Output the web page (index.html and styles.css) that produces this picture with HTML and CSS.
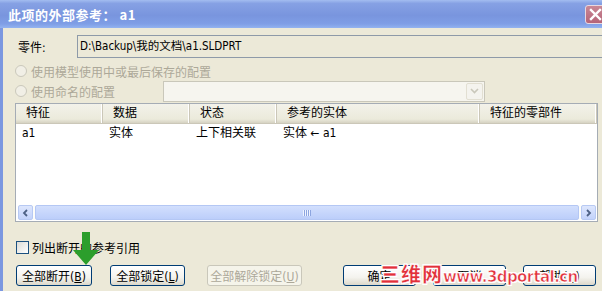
FILE: index.html
```html
<!DOCTYPE html>
<html lang="zh">
<head>
    <meta charset="UTF-8">
    <title>此项的外部参考</title>
    <link rel="stylesheet" href="styles.css">
</head>
<body>
    <div class="window">
        <div class="titlebar">
            <span class="title">此项的外部参考： a1</span>
            <span class="closeBtn">
                <svg width="13" height="13" viewBox="0 0 13 13"><path d="M2 2 L11 11 M11 2 L2 11" stroke="#fff" stroke-width="2.4" stroke-linecap="square"/></svg>
            </span>
        </div>
        <div class="dialogBody">
            <div class="partRow">
                <span class="partLabel">零件:</span>
                <div class="partPath">D:\Backup\我的文档\a1.SLDPRT</div>
            </div>
            <div class="radioRow">
                <span class="radio"></span>
                <span class="disabledText">使用模型使用中或最后保存的配置</span>
            </div>
            <div class="radioRow second">
                <span class="radio"></span>
                <span class="disabledText">使用命名的配置</span>
                <div class="combo">
                    <span class="comboBtn">
                        <svg width="9" height="6" viewBox="0 0 9 6"><path d="M1 1 L4.5 4.5 L8 1" fill="none" stroke="#c9c7ba" stroke-width="1.6"/></svg>
                    </span>
                </div>
            </div>
            <div class="listView">
                <div class="listHeader">
                    <div class="headCell">特征</div>
                    <div class="headCell">数据</div>
                    <div class="headCell">状态</div>
                    <div class="headCell">参考的实体</div>
                    <div class="headCell">特征的零部件</div>
                </div>
                <div class="listRow">
                    <div class="cell">a1</div>
                    <div class="cell">实体</div>
                    <div class="cell">上下相关联</div>
                    <div class="cell">实体 ← a1</div>
                    <div class="cell"></div>
                </div>
                <div class="listFill"></div>
                <div class="hScroll">
                    <span class="scrollBtn">
                        <svg width="7" height="8" viewBox="0 0 7 8"><path d="M5 1 L2 4 L5 7" fill="none" stroke="#4d6185" stroke-width="1.8"/></svg>
                    </span>
                    <div class="scrollTrack">
                        <div class="scrollThumb"><span class="grip"></span></div>
                    </div>
                    <span class="scrollBtn">
                        <svg width="7" height="8" viewBox="0 0 7 8"><path d="M2 1 L5 4 L2 7" fill="none" stroke="#4d6185" stroke-width="1.8"/></svg>
                    </span>
                </div>
            </div>
            <div class="checkRow">
                <span class="checkBox"></span>
                <span>列出断开的参考引用</span>
            </div>
            <div class="buttonRow">
                <button class="winBtn w76">全部断开(<u>B</u>)</button>
                <button class="winBtn w75 gapA">全部锁定(<u>L</u>)</button>
                <button class="winBtn w95 gapB" disabled>全部解除锁定(<u>U</u>)</button>
                <button class="winBtn w73 gapC">确定</button>
                <button class="winBtn w73 gapD">取消</button>
                <button class="winBtn w73 gapD">帮助(<u>H</u>)</button>
            </div>
        </div>
        <svg class="greenArrow" width="30" height="34" viewBox="0 0 30 34">
            <path d="M11 0 H19 V18 H28 L15 33 L2 18 H11 Z" fill="#2c9e2c"/>
        </svg>
        <div class="watermark"><span class="wmCn">三维网</span>www.3dportal.cn</div>
    </div>
</body>
</html>
```

FILE: styles.css
```css
body {
    margin: 0;
    padding: 0;
    background-color: #ece9d8;
    font-family: "DejaVu Sans Condensed", "Noto Sans CJK SC", sans-serif;
    font-size: 12px;
    color: #000;
}

.window {
    position: relative;
    width: 602px;
    height: 291px;
    overflow: hidden;
    display: flex;
    flex-direction: column;
}

.titlebar {
    height: 28px;
    flex-shrink: 0;
    display: flex;
    align-items: center;
    justify-content: space-between;
    padding-left: 8px;
    background: linear-gradient(to bottom, #a3bdf0 0, #86a1e4 12%, #7995de 55%, #7f9ee6 85%, #93b3f0 100%);
}

.title {
    color: #fff;
    font-family: "Noto Sans CJK SC", sans-serif;
    font-weight: bold;
    font-size: 13px;
    letter-spacing: 0.5px;
}

.closeBtn {
    width: 20px;
    height: 19px;
    margin-right: -3px;
    margin-top: 1px;
    box-sizing: border-box;
    border: 1px solid #e8d8e0;
    border-radius: 3px;
    background: linear-gradient(to bottom, #c98896, #b56478);
    display: flex;
    align-items: center;
    justify-content: center;
}

.dialogBody {
    flex: 1;
    border-left: 3px solid #7b97e0;
    padding-left: 12px;
    display: flex;
    flex-direction: column;
}

.partRow {
    display: flex;
    align-items: center;
    margin-top: 7px;
    height: 23px;
}

.partLabel {
    width: 59px;
    margin-left: 3px;
    flex-shrink: 0;
}

.partPath {
    width: 560px;
    flex-shrink: 0;
    height: 23px;
    box-sizing: border-box;
    border: 1px solid #8e9aa8;
    padding-left: 2px;
    line-height: 21px;
    font-size: 11.5px;
}

.radioRow {
    display: flex;
    align-items: center;
    height: 16px;
    margin-top: 5px;
}

.radioRow.second {
    height: 22px;
    margin-top: 1px;
}

.radio {
    width: 12px;
    height: 12px;
    box-sizing: border-box;
    border: 1px solid #cac8bb;
    border-radius: 50%;
    background-color: #f1efe6;
    margin-right: 4px;
}

.disabledText {
    color: #aca899;
}

.combo {
    margin-left: 48px;
    width: 322px;
    height: 21px;
    box-sizing: border-box;
    border: 1px solid #c9c7ba;
    background-color: #f6f5ef;
    display: flex;
    justify-content: flex-end;
    align-items: stretch;
    padding: 1px;
}

.comboBtn {
    width: 15px;
    border: 1px solid #e2dfd2;
    border-radius: 2px;
    background-color: #f4f3ee;
    display: flex;
    align-items: center;
    justify-content: center;
}

.listView {
    margin-top: 1px;
    width: 583px;
    height: 119px;
    box-sizing: border-box;
    border: 1px solid #a5acb5;
    background-color: #fff;
    display: flex;
    flex-direction: column;
}

.listHeader, .listRow {
    display: grid;
    grid-template-columns: 87px 87px 87px 203px 117px;
}

.listHeader {
    height: 19px;
    background: linear-gradient(to bottom, #f3f2ea, #ebeadb 80%, #d6d2c2);
    border-bottom: 1px solid #cbc7b8;
}

.headCell {
    padding-left: 10px;
    line-height: 19px;
    border-right: 1px solid #cbc7b8;
    box-shadow: inset -1px 0 0 #fff;
    white-space: nowrap;
}

.listRow {
    height: 16px;
    margin-top: 1px;
}

.cell {
    padding-left: 6px;
    line-height: 16px;
    white-space: nowrap;
}

.listFill {
    flex: 1;
}

.hScroll {
    height: 15px;
    margin: 0 1px 1px 2px;
    display: flex;
    background-color: #fdfdfa;
}

.scrollBtn {
    width: 15px;
    box-sizing: border-box;
    border: 1px solid #b7c9f3;
    border-radius: 2px;
    background: linear-gradient(to bottom, #dde6fd, #c3d3fb);
    display: flex;
    align-items: center;
    justify-content: center;
}

.scrollTrack {
    flex: 1;
    padding: 0 2px;
    display: flex;
}

.scrollThumb {
    flex: 1;
    box-sizing: border-box;
    border: 1px solid #b4c7f4;
    border-radius: 2px;
    background: linear-gradient(to bottom, #d2dffd, #bccefa);
    display: flex;
    align-items: center;
    justify-content: center;
}

.grip {
    width: 8px;
    height: 6px;
    background: repeating-linear-gradient(to right, #eef3ff 0 1px, #8ca5e0 1px 2px);
}

.checkRow {
    display: flex;
    align-items: center;
    height: 13px;
    margin-top: 19px;
    margin-left: 1px;
}

.checkBox {
    width: 13px;
    height: 13px;
    box-sizing: border-box;
    border: 1px solid #1c5180;
    background: linear-gradient(135deg, #dcdcd7, #fff);
    margin-right: 3px;
}

.buttonRow {
    display: flex;
    margin-top: 11px;
    margin-left: 1px;
}

.winBtn {
    height: 21px;
    padding: 0;
    box-sizing: border-box;
    border: 1px solid #003c74;
    border-radius: 3px;
    background: linear-gradient(to bottom, #fff, #f4f3ee 60%, #dcd8ca);
    font-family: "DejaVu Sans Condensed", "Noto Sans CJK SC", sans-serif;
    font-size: 12px;
    color: #000;
}

.winBtn:disabled {
    border-color: #c9c7ba;
    background: #f5f4ea;
    color: #aca899;
}

.w76 { width: 76px; }
.w75 { width: 75px; }
.w95 { width: 95px; }
.w73 { width: 73px; }

.gapA { margin-left: 18px; }
.gapB { margin-left: 22px; }
.gapC { margin-left: 41px; }
.gapD { margin-left: 17px; }

.greenArrow {
    position: absolute;
    left: 71px;
    top: 232px;
}

.watermark {
    position: absolute;
    left: 380px;
    top: 259px;
    color: #e2303a;
    font-family: "DejaVu Sans", sans-serif;
    font-weight: bold;
    font-size: 15px;
    letter-spacing: -0.6px;
    -webkit-text-stroke: 0.6px #fff;
    text-shadow: 1px 1px 0 #fff, -1px -1px 0 #fff, 1px -1px 0 #fff, -1px 1px 0 #fff;
}

.wmCn {
    font-family: "Noto Sans CJK SC", sans-serif;
    font-weight: 900;
    font-size: 20px;
    letter-spacing: 1px;
}
```
